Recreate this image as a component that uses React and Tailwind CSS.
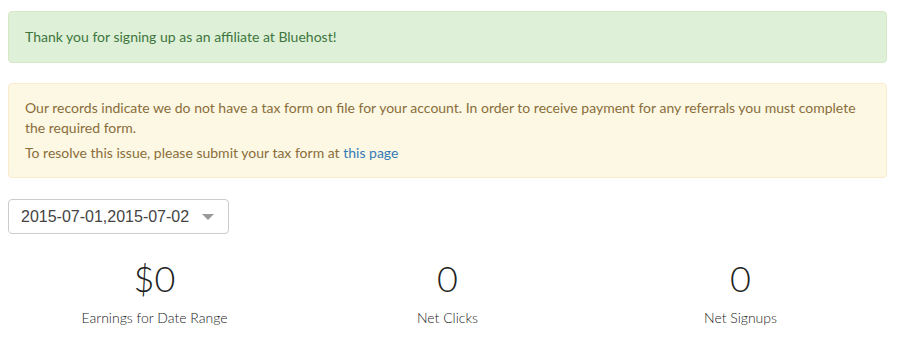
export default function App() {
  const font = { fontFamily: 'Lato, "Open Sans", sans-serif' };
  return (
    <div className="w-[903px] h-[342px] bg-white px-2 pt-[11px] text-[#333]" style={font}>
      <div className="w-[879px] rounded border border-[#d6e9c6] bg-[#dff0d8] px-4 py-[15px] text-[14px] leading-5 text-[#3c763d]">
        Thank you for signing up as an affiliate at Bluehost!
      </div>
      <div className="mt-5 w-[879px] rounded border border-[#faebcc] bg-[#fcf8e3] px-4 py-[14px] text-[14px] leading-5 text-[#8a6d3b]">
        <p>
          Our records indicate we do not have a tax form on file for your account. In order to receive payment for any referrals you must complete the required form.
        </p>
        <p className="mt-[5px]">
          To resolve this issue, please submit your tax form at <a className="text-[#337ab7]">this page</a>
        </p>
      </div>
      <div className="mt-[21px] flex h-[35px] w-[221px] items-center justify-between rounded border border-[#ccc] bg-white pl-3 pr-[14px] text-[16px] text-[#444]" style={{ fontFamily: '"Liberation Sans", Arial, sans-serif' }}>
        <span>2015-07-01,2015-07-02</span>
        <span className="h-0 w-0 border-x-[6px] border-t-[6px] border-x-transparent border-t-[#999]" />
      </div>
      <div className="mt-[22px] grid w-[879px] grid-cols-3">
        {[
          ['$0', 'Earnings for Date Range'],
          ['0', 'Net Clicks'],
          ['0', 'Net Signups'],
        ].map(([n, l]) => (
          <div key={l} className="flex flex-col items-center">
            <div className="text-[36px] font-light leading-[44px] text-[#222]">{n}</div>
            <div className="mt-[8px] text-[14px] font-light leading-5 text-[#222]">{l}</div>
          </div>
        ))}
      </div>
    </div>
  );
}
